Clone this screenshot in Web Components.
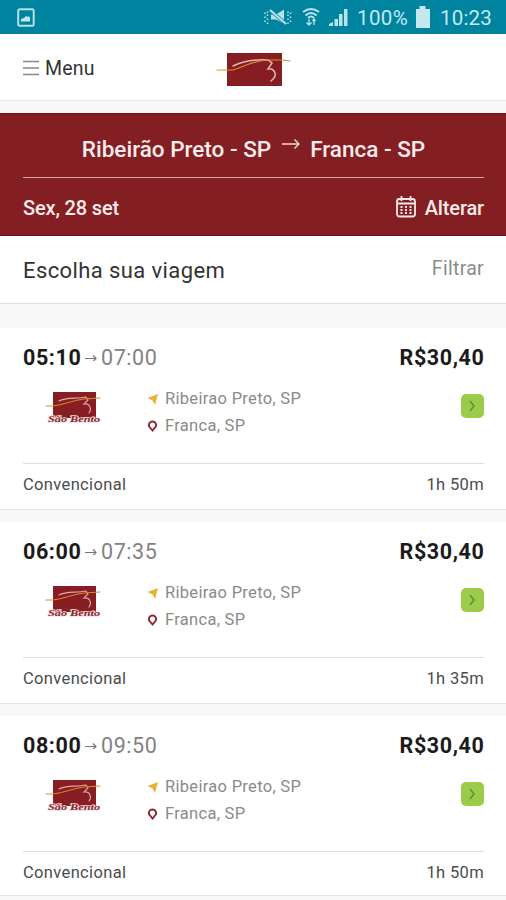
<!DOCTYPE html>
<html lang="pt-BR">
<head>
<meta charset="utf-8">
<title>Escolha sua viagem</title>
<style>
html,body{margin:0;padding:0}
body{width:506px;height:900px;overflow:hidden;background:#f8f8f8;font-family:Roboto,"Noto Sans",sans-serif;color:#222}
</style>
</head>
<body>
<trip-app></trip-app>
<script>
const define = (name, html, setup) => customElements.define(name, class extends HTMLElement {
  connectedCallback() {
    if (this.shadowRoot) return;
    const t = document.createElement('template');
    t.innerHTML = html;
    this.attachShadow({mode: 'open'}).append(t.content.cloneNode(true));
    if (setup) setup(this, this.shadowRoot);
  }
});

define('brand-logo', `
<style>:host{display:block;width:76px;height:36px}svg{display:block;overflow:visible}</style>
<svg width="76" height="36" viewBox="0 0 76 36" fill="none" stroke-linecap="round">
<rect x="11" y="1" width="55" height="33" fill="#851d22"/>
<path d="M17 14C27 9 37 7 52 8L56 11L52 17C58 16 61 22 58 26L55 29" stroke="#e4b5b2" stroke-width="1.5"/>
<path d="M1 18H17C25 16 38 8 53 8H67L74 9" stroke="#db8f2d" stroke-width="1.2"/>
</svg>`);

define('company-logo', `
<style>:host{display:block;width:58px;height:34px}svg{display:block;overflow:visible}text{font:italic bold 9px "Liberation Serif",serif}</style>
<svg width="58" height="34" viewBox="0 0 58 34" fill="none" stroke-linecap="round">
<rect x="8" y="0" width="43" height="26" fill="#871e24"/>
<path d="M14 9C21 5 31 7 41 5L43 8L39 12C45 11 47 17 44 21" stroke="#dfa9a8" stroke-width="1.1"/>
<path d="M1 14H8C18 13 29 8 39 7L55 6" stroke="#dc8a2d" stroke-width="1"/>
<text x="3" y="29.5" textLength="52" lengthAdjust="spacingAndGlyphs" fill="#8b2530" stroke="#f3dedf" stroke-width="1.4" paint-order="stroke">São Bento</text>
</svg>`);

define('status-bar', `
<style>
:host{display:flex;height:34px;background:#00839f;align-items:center;justify-content:space-between;padding:0 10px 0 17px;color:#c4e8ee;box-sizing:border-box}
.r{display:flex;align-items:center}svg{display:block}
span{font-size:20.500px;padding-top:2px;height:32px;line-height:32px;white-space:nowrap}
.p{margin-left:9px;letter-spacing:.4px;width:54px}.c{width:56px;margin-left:9px;letter-spacing:.2px}
</style>
<svg width="18" height="19" viewBox="0 0 18 19"><rect x="1.2" y="1.2" width="15.5" height="16.5" rx="1.5" fill="none" stroke="#b5e0e9" stroke-width="2"/><path d="M4 13.500V11l3-1 2-2 2 1 1-1 1 2v3.500z" fill="#c4e8ee"/></svg>
<div class="r">
<svg width="28" height="20" viewBox="0 0 28 20" stroke="#b9e2ea" fill="none" stroke-width="1.5"><g transform="translate(0 1.500)"><path d="M1 4v1.500M1 8v1.500M1 12v1.500M3.500 3v1.500M3.500 6v1.500M3.500 10v1.500M3.500 14v1.500M26.500 4v1.500M26.500 8v1.500M26.500 12v1.500M24 3v1.500M24 6v1.500M24 10v1.500M24 14v1.500"/><path d="M7 6h5l8-5v14l-8-4H7z" fill="#b9e2ea" stroke="none"/><path d="M6 1.500l16 14" stroke="#00839f" stroke-width="3.500"/><path d="M6 1.500l16 14" stroke-width="2.200"/></g></svg>
<svg style="margin-left:10px" width="18" height="20" viewBox="0 0 18 20" fill="none" stroke="#b9e2ea" stroke-width="2"><path d="M1 5Q9-1 17 5M3.500 8.500Q9 3.500 14.500 8.500M6 11Q9 8 12 11"/><path d="M7 12v6M4.500 15.500L7 18l2.500-2.500M12 18v-6M10.500 14l1.500-2 1.500 2" stroke-width="1.3"/></svg>
<svg style="margin-left:9px" width="19" height="20" viewBox="0 0 19 20" fill="#b9e2ea"><path d="M0 19v-2l4-2v4zM5.500 12H9v7H5.500zM10 7H13.500v12h-3.500zM15 2h3.500v17h-3.500z"/></svg>
<span class="p">100%</span>
<svg style="margin-left:4px" width="16" height="22" viewBox="0 0 16 22"><path d="M1 3h3.500V0h6v3H15v19H1z" fill="#c4e8ee"/></svg>
<span class="c">10:23</span>
</div>`);

define('top-nav', `
<style>
:host{display:grid;grid-template-columns:1fr 76px 1fr;height:67px;background:#fff;align-items:center;box-sizing:border-box;border-bottom:1px solid #eaeaea;padding:0 0 0 23px}
.m{display:flex;align-items:center;gap:6px;font-size:19.500px;letter-spacing:.2px;color:#333;padding-top:2px}
svg{display:block}brand-logo{margin-top:5px;margin-left:-10.500px}
</style>
<div class="m"><svg width="16" height="16" viewBox="0 0 16 16" stroke="#888" stroke-width="1.3"><path d="M0 1.500h16M0 8h16M0 14.500h16"/></svg><span>Menu</span></div>
<brand-logo></brand-logo>`);

define('route-banner', `
<style>
:host{display:block;height:123px;margin-top:12px;background:#831f22;color:#fbeceb;padding:0 22px 0 23px;box-sizing:border-box;border-top:1px solid #741015;border-bottom:1px solid #741015;font-weight:500}
.a{height:64px;display:flex;justify-content:center;align-items:center;font-size:22.500px;padding-top:7px;box-sizing:border-box;white-space:nowrap;border-bottom:1px solid #d9a5a5;letter-spacing:0}
svg{display:block}.ar{margin:-10px 10px 0 11px}
.b{height:57px;display:flex;justify-content:space-between;align-items:center;font-size:20px;letter-spacing:-.15px;padding-top:3px;box-sizing:border-box}
.e{display:flex;align-items:center;gap:9px}.e svg{margin-top:-3px}
</style>
<div class="a"><span>Ribeirão Preto - SP</span><svg class="ar" width="18" height="12" viewBox="0 0 18 12" fill="none" stroke="#f3d9d8" stroke-width="1.4"><path d="M0 6h17M12.500 1.500L17 6l-4.500 4.500"/></svg><span>Franca - SP</span></div>
<div class="b"><span>Sex, 28 set</span><div class="e"><svg width="20" height="22" viewBox="0 0 20 22" fill="none" stroke="#fbe9e7" stroke-width="1.8"><rect x="1" y="3" width="18" height="17.500" rx="2.500"/><path d="M1 7.500h18M5.500 0v5M14.500 0v5"/><path d="M4.500 11h2M9 11h2M13.500 11h2M4.500 14h2M9 14h2M13.500 14h2M4.500 17h2M9 17h2M13.500 17h2"/></svg><span>Alterar</span></div></div>`);

define('list-heading', `
<style>
:host{display:flex;justify-content:space-between;align-items:center;height:68px;background:#fff;border-bottom:1px solid #dedede;box-sizing:border-box;padding:0 22px 0 23px;margin-bottom:24px}
h1{margin:2px 0 0;font-size:22px;font-weight:400;letter-spacing:.4px;color:#333}
span{font-size:19.500px;color:#8b8b8b;letter-spacing:.3px;margin-top:-3px}
</style><h1>Escolha sua viagem</h1><span>Filtrar</span>`);

define('trip-card', `
<style>
:host{display:block;height:182px;background:#fff;border-bottom:1px solid #e3e3e3;box-sizing:border-box;padding:15px 22px 0 23px;margin-bottom:12px}
svg{display:block}
.t{height:28px;display:flex;align-items:center;font-size:21.500px;box-sizing:border-box}
.dep,.price{font-weight:700;color:#1b1b1b;letter-spacing:.6px}.dep{width:62px}.price{margin-left:auto;margin-right:-.5px}
.arr{color:#828282;letter-spacing:.55px;margin-left:4px}
.m{height:92px;display:grid;grid-template-columns:123px 1fr 23px;box-sizing:border-box}
company-logo{margin:21px 0 0 22px}
.r{padding-top:14px;font-size:16.500px;color:#8a8a8a;letter-spacing:.3px}
.r div{display:flex;align-items:center;height:27px}.r svg{width:19px}
.go{margin-top:23px;width:23px;height:24px;border-radius:5px;background:#9acb49;display:grid;place-items:center}
.f{border-top:1px solid #dedede;height:41px;box-sizing:border-box;display:flex;align-items:center;justify-content:space-between;font-size:16.500px;letter-spacing:.35px;color:#4b4b4b}
</style>
<div class="t"><span class="dep"></span><svg width="12" height="8" viewBox="0 0 12 8" fill="none" stroke="#777" stroke-width="1.2"><path d="M0 5.500h11M8 2.500l3 3-3 3"/></svg><span class="arr"></span><span class="price">R$30,40</span></div>
<div class="m"><company-logo></company-logo>
<div class="r"><div><svg width="19" height="12" viewBox="0 0 19 12"><path d="M1.500 5L12 1L9 12L6.500 7.500z" fill="#e9b233"/></svg><span>Ribeirao Preto, SP</span></div><div><svg width="19" height="12" viewBox="0 0 19 12"><path d="M6.500 10.500L3.200 6.500A3.600 3.600 0 1 1 9.800 6.500z" fill="none" stroke="#8c2530" stroke-width="1.9"/></svg><span>Franca, SP</span></div></div>
<div class="go"><svg width="7" height="12" viewBox="0 0 7 12" fill="none" stroke="#5f8c2f" stroke-width="1.4"><path d="M1 1l4 5-4 5"/></svg></div></div>
<div class="f"><span>Convencional</span><span class="dur"></span></div>`,
(host, root) => { for (const k of ['dep','arr','dur']) root.querySelector('.' + k).textContent = host.getAttribute(k); });

define('trip-app', `
<style>:host{display:block;width:506px;height:900px;overflow:hidden}trip-card:last-of-type{height:180px}</style>
<status-bar></status-bar><top-nav></top-nav><route-banner></route-banner><list-heading></list-heading>
<trip-card dep="05:10" arr="07:00" dur="1h 50m"></trip-card>
<trip-card dep="06:00" arr="07:35" dur="1h 35m"></trip-card>
<trip-card dep="08:00" arr="09:50" dur="1h 50m"></trip-card>`);
</script>
</body>
</html>
